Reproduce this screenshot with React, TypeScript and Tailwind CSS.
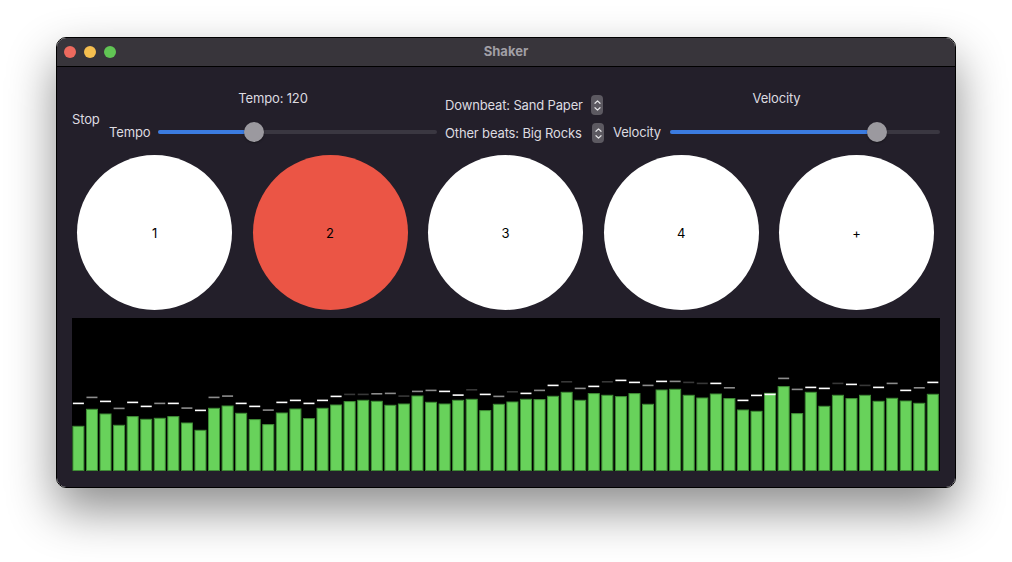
import React from "react";

const font = { fontFamily: "Inter, 'Noto Sans', sans-serif" };

// measured bar levels (px from bottom) and peak-hold markers
const levels = [
  44.7, 61.7, 57, 45.7, 54.4, 51.7, 52.7, 54.4, 48, 40.7, 62.7, 65, 57.7, 51.4, 46.4, 58,
  62, 52.4, 62.7, 66, 69.4, 70.7, 69.7, 65.7, 67, 75, 68.7, 67, 70.7, 71.7, 60.4, 66.7,
  69, 71.7, 71.4, 74.7, 78.7, 70.7, 77.4, 75.7, 74.4, 77.4, 66.7, 81, 81.7, 75.7, 73, 77,
  72.4, 61, 59.7, 77.7, 84.4, 57.4, 78.7, 64.7, 75.7, 72.4, 75.7, 69.7, 72.7, 70, 67.7, 76.7,
];
const peaks = [
  67.4, 73.4, 69.4, 62.4, 68.4, 64.4, 67.4, 67.4, 62.7, 60.4, 73.4, 74.7, 67.4, 64.4, 60.7, 68.4,
  70.4, 67.4, 70.4, 74.4, 76.4, 76.4, 77, 77.4, 74.7, 79.4, 80.4, 79.4, 75.7, 81, 76.4, 74.4,
  79, 77.4, 80.4, 85.4, 89, 82.4, 84.4, 89, 90.4, 88.4, 85.4, 89.4, 89.4, 88.4, 87.4, 87.4,
  83, 70.4, 75.4, 76.4, 92.4, 81.4, 83.4, 82.4, 87.4, 86.4, 85.4, 83.4, 87.4, 80.4, 83, 88.4,
];
// w = fresh peak, g = fading, d = almost gone
const peakTone =
  "wgwgwwgwgwggwwgw" + "wwwwddggdggwwdwg" + "dwgwdgwdwwgwgddw" + "gwwwggwwdwdwgwgw";
const toneOpacity: Record<string, number> = { w: 1, g: 0.55, d: 0.22 };

function Slider({ value }: { value: number }) {
  return (
    <div className="relative h-5 flex-1">
      <div className="absolute left-0 right-0 top-[8px] h-[4px] rounded-full bg-[#3a3741]" />
      <div
        className="absolute left-0 top-[8px] h-[4px] rounded-full bg-[#3b7be0]"
        style={{ width: `calc(${value} * (100% - 20px) + 10px)` }}
      />
      <div
        className="absolute top-0 h-5 w-5 rounded-full bg-[#9b999f] shadow-[0_1px_2px_rgba(0,0,0,0.4)]"
        style={{ left: `calc(${value} * (100% - 20px))` }}
      />
    </div>
  );
}

function Stepper() {
  return (
    <div className="flex h-[20px] w-[12px] shrink-0 flex-col items-center justify-center gap-[3px] rounded-[4px] bg-[#5c5961]">
      <svg width="7" height="4" viewBox="0 0 7 4" fill="none">
        <path d="M1 3.3 L3.5 0.9 L6 3.3" stroke="#e6e5e8" strokeWidth="1.2" strokeLinecap="round" strokeLinejoin="round" />
      </svg>
      <svg width="7" height="4" viewBox="0 0 7 4" fill="none">
        <path d="M1 0.7 L3.5 3.1 L6 0.7" stroke="#e6e5e8" strokeWidth="1.2" strokeLinecap="round" strokeLinejoin="round" />
      </svg>
    </div>
  );
}

function Pad({ label, active }: { label: string; active?: boolean }) {
  return (
    <div
      className={`flex h-[155px] w-[155px] items-center justify-center rounded-full text-[13px] text-black ${
        active ? "bg-[#eb5545]" : "bg-white"
      }`}
    >
      {label}
    </div>
  );
}

function Meter() {
  const W = 868;
  const H = 153;
  const pitch = W / levels.length;
  return (
    <svg width={W} height={H} className="block bg-black">
      {levels.map((h, i) => {
        const x = i * pitch + 0.9;
        return (
          <g key={i}>
            <rect x={x} y={H - h} width={11} height={h - 0.5} fill="#68d25b" stroke="#3f8c36" strokeWidth={1} />
            <rect x={x} y={H - peaks[i] - 1} width={11} height={1.6} fill="#ffffff" opacity={toneOpacity[peakTone[i]]} />
          </g>
        );
      })}
    </svg>
  );
}

export default function App() {
  return (
    <div className="h-[562px] w-[1012px] bg-white pl-[56px] pt-[37px]" style={font}>
      <div className="flex h-[451px] w-[900px] flex-col overflow-hidden rounded-[10px] border border-black shadow-[0_22px_48px_rgba(0,0,0,0.45)]">
        {/* Title bar */}
        <div className="relative flex h-[29px] shrink-0 items-center border-b border-black bg-[#38353b] pl-[7px]">
          <div className="flex gap-[8px]">
            <span className="h-3 w-3 rounded-full bg-[#ed6a5e]" />
            <span className="h-3 w-3 rounded-full bg-[#f5bf4f]" />
            <span className="h-3 w-3 rounded-full bg-[#61c554]" />
          </div>
          <div className="absolute inset-0 flex items-center justify-center text-[13px] font-bold text-[#a19fa5]">
            Shaker
          </div>
        </div>

        {/* Content */}
        <div className="flex flex-1 flex-col bg-[#231f2a] px-[15px] pt-[23px] text-[13px] leading-4 tracking-[-0.15px] text-[#dddbe0]">
          {/* Controls */}
          <div className="flex h-[53px] items-start">
            <div className="mt-[21px] w-[37px] whitespace-nowrap">Stop</div>

            <div className="flex w-[328px] flex-col">
              <div className="text-center">Tempo: 120</div>
              <div className="mt-[16px] flex items-center gap-2">
                <span className="whitespace-nowrap">Tempo</span>
                <Slider value={0.332} />
              </div>
            </div>

            <div className="ml-2 mt-[5px] flex w-[160px] flex-col gap-2">
              <div className="flex items-center gap-2">
                <span className="w-[138px] whitespace-nowrap">Downbeat: Sand Paper</span>
                <Stepper />
              </div>
              <div className="flex items-center gap-2">
                <span className="w-[139px] whitespace-nowrap">Other beats: Big Rocks</span>
                <Stepper />
              </div>
            </div>

            <div className="ml-2 flex flex-1 flex-col">
              <div className="text-center">Velocity</div>
              <div className="mt-[16px] flex items-center gap-[9px]">
                <span className="whitespace-nowrap">Velocity</span>
                <Slider value={0.788} />
              </div>
            </div>
          </div>

          {/* Pads */}
          <div className="mt-[12px] flex justify-between pl-[5px] pr-[6px]">
            <Pad label="1" />
            <Pad label="2" active />
            <Pad label="3" />
            <Pad label="4" />
            <Pad label="+" />
          </div>

          {/* Spectrum */}
          <div className="mt-[8px]">
            <Meter />
          </div>
        </div>
      </div>
    </div>
  );
}
